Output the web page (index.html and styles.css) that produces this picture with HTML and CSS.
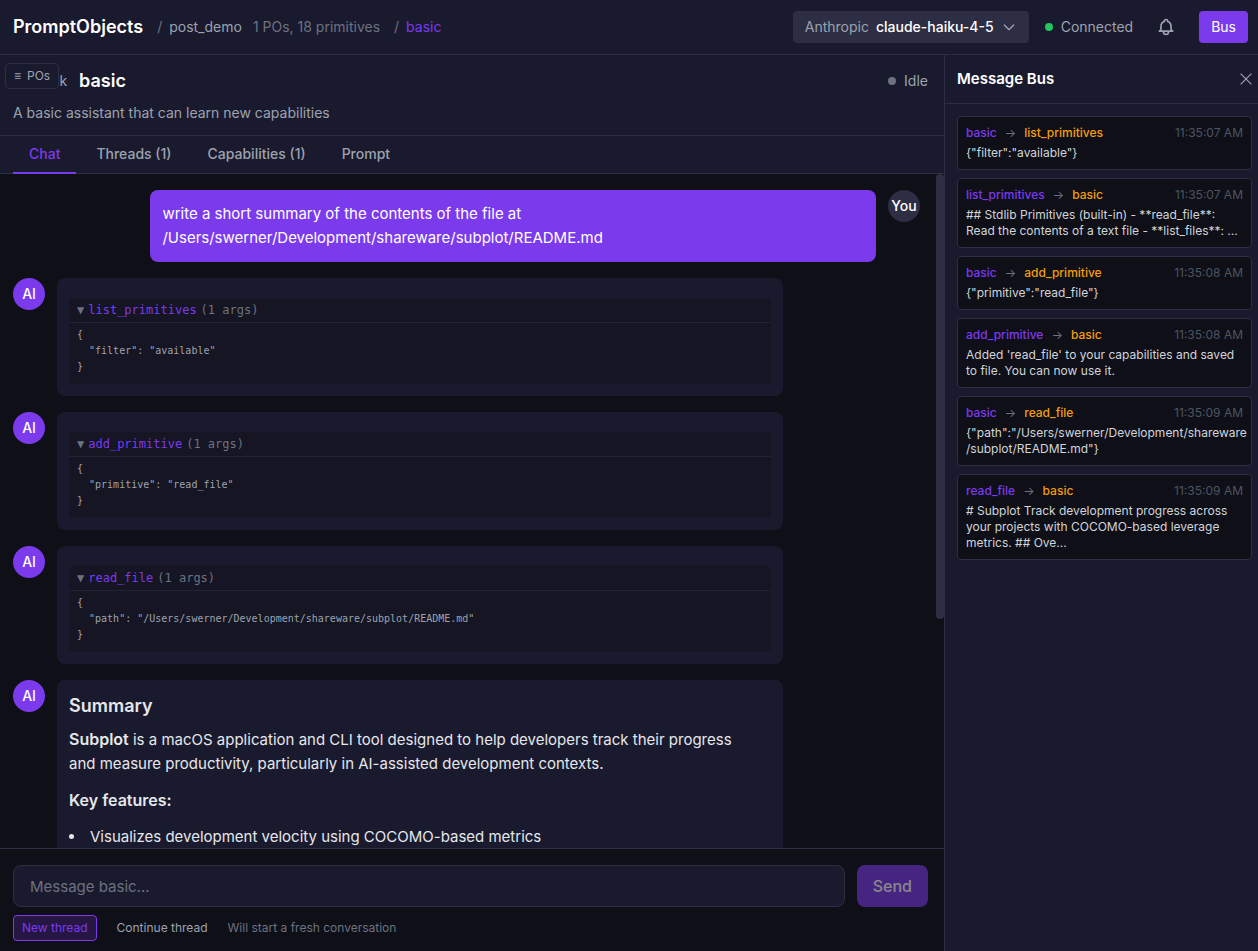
FILE: index.html
```html
<!DOCTYPE html>
<html lang="en">
<head>
<meta charset="utf-8">
<title>PromptObjects</title>
<link rel="stylesheet" href="styles.css">
</head>
<body>
<div class="app">
  <header class="topbar">
    <div class="topbar-left">
      <h1 class="logo">PromptObjects</h1>
      <nav class="crumb"><span class="slash">/</span><span class="crumb-name">post_demo</span><span class="crumb-info">1 POs, 18 primitives</span></nav>
      <nav class="crumb"><span class="slash">/</span><a class="crumb-current" href="#">basic</a></nav>
    </div>
    <div class="topbar-right">
      <button class="model-picker" type="button">
        <span class="provider">Anthropic</span>
        <span class="model">claude-haiku-4-5</span>
        <svg class="chevron" viewBox="0 0 24 24" fill="none" stroke="currentColor" stroke-width="2" stroke-linecap="round" stroke-linejoin="round"><path d="M19 9l-7 7-7-7"/></svg>
      </button>
      <div class="status"><span class="dot dot-online"></span>Connected</div>
      <button class="icon-button" type="button" aria-label="Notifications">
        <svg class="bell" viewBox="0 0 24 24" fill="none" stroke="currentColor" stroke-width="2" stroke-linecap="round" stroke-linejoin="round"><path d="M15 17h5l-1.405-1.405A2.032 2.032 0 0118 14.158V11a6.002 6.002 0 00-4-5.659V5a2 2 0 10-4 0v.341C7.67 6.165 6 8.388 6 11v3.159c0 .538-.214 1.055-.595 1.436L4 17h5m6 0v1a3 3 0 11-6 0v-1m6 0H9"/></svg>
      </button>
      <button class="bus-toggle" type="button">Bus</button>
    </div>
  </header>

  <div class="body">
    <main class="main">
      <button class="pos-toggle" type="button"><span>≡</span><span>POs</span></button>
      <section class="object-head">
        <div class="object-row">
          <button class="back" type="button"><span>←</span><span>Back</span></button>
          <h2 class="object-name">basic</h2>
          <div class="status object-status"><span class="dot dot-idle"></span>Idle</div>
        </div>
        <p class="object-desc">A basic assistant that can learn new capabilities</p>
      </section>

      <nav class="tabs">
        <button class="tab tab-active" type="button">Chat</button>
        <button class="tab" type="button">Threads (1)</button>
        <button class="tab" type="button">Capabilities (1)</button>
        <button class="tab" type="button">Prompt</button>
      </nav>

      <div class="conversation">
        <div class="messages">
          <article class="message message-user">
            <div class="avatar avatar-user">You</div>
            <div class="bubble bubble-user">write a short summary of the contents of the file at<br>/Users/swerner/Development/shareware/subplot/README.md</div>
          </article>

          <article class="message">
            <div class="avatar">AI</div>
            <div class="bubble">
              <div class="tool">
                <button class="tool-head" type="button"><span>▼</span><span class="tool-name">list_primitives</span><span>(1 args)</span></button>
                <pre class="tool-body">{
  "filter": "available"
}</pre>
              </div>
            </div>
          </article>

          <article class="message">
            <div class="avatar">AI</div>
            <div class="bubble">
              <div class="tool">
                <button class="tool-head" type="button"><span>▼</span><span class="tool-name">add_primitive</span><span>(1 args)</span></button>
                <pre class="tool-body">{
  "primitive": "read_file"
}</pre>
              </div>
            </div>
          </article>

          <article class="message">
            <div class="avatar">AI</div>
            <div class="bubble">
              <div class="tool">
                <button class="tool-head" type="button"><span>▼</span><span class="tool-name">read_file</span><span>(1 args)</span></button>
                <pre class="tool-body">{
  "path": "/Users/swerner/Development/shareware/subplot/README.md"
}</pre>
              </div>
            </div>
          </article>

          <article class="message">
            <div class="avatar">AI</div>
            <div class="bubble bubble-long">
              <h3 class="md-title">Summary</h3>
              <p class="md-text"><strong>Subplot</strong> is a macOS application and CLI tool designed to help developers track their progress<br>and measure productivity, particularly in AI-assisted development contexts.</p>
              <p class="md-text"><strong>Key features:</strong></p>
              <ul class="md-list">
                <li>Visualizes development velocity using COCOMO-based metrics</li>
              </ul>
            </div>
          </article>
        </div>
        <div class="scroll-thumb"></div>
      </div>

      <form class="composer">
        <div class="composer-row">
          <input class="composer-input" type="text" placeholder="Message basic..." aria-label="Message basic">
          <button class="send" type="submit" disabled>Send</button>
        </div>
        <div class="composer-options">
          <button class="option option-active" type="button">New thread</button>
          <button class="option" type="button">Continue thread</button>
          <span class="option-hint">Will start a fresh conversation</span>
        </div>
      </form>
    </main>

    <aside class="bus">
      <div class="bus-head">
        <h2 class="bus-title">Message Bus</h2>
        <button class="close" type="button" aria-label="Close"><svg class="close-icon" viewBox="0 0 12 12" fill="none" stroke="currentColor" stroke-width="1.2"><path d="M.6.6l10.8 10.8M11.4.6L.6 11.4"/></svg></button>
      </div>
      <div class="bus-list">
        <article class="event">
          <div class="event-head"><span class="from">basic</span><span class="arrow">→</span><span class="to">list_primitives</span><time class="time">11:35:07 AM</time></div>
          <p class="event-text">{"filter":"available"}</p>
        </article>
        <article class="event">
          <div class="event-head"><span class="from">list_primitives</span><span class="arrow">→</span><span class="to">basic</span><time class="time">11:35:07 AM</time></div>
          <p class="event-text">## Stdlib Primitives (built-in) - **read_file**: Read the contents of a text file - **list_files**: ...</p>
        </article>
        <article class="event">
          <div class="event-head"><span class="from">basic</span><span class="arrow">→</span><span class="to">add_primitive</span><time class="time">11:35:08 AM</time></div>
          <p class="event-text">{"primitive":"read_file"}</p>
        </article>
        <article class="event">
          <div class="event-head"><span class="from">add_primitive</span><span class="arrow">→</span><span class="to">basic</span><time class="time">11:35:08 AM</time></div>
          <p class="event-text">Added 'read_file' to your capabilities and saved to file. You can now use it.</p>
        </article>
        <article class="event">
          <div class="event-head"><span class="from">basic</span><span class="arrow">→</span><span class="to">read_file</span><time class="time">11:35:09 AM</time></div>
          <p class="event-text event-path">{"path":"/Users/swerner/Development/shareware<br>/subplot/README.md"}</p>
        </article>
        <article class="event">
          <div class="event-head"><span class="from">read_file</span><span class="arrow">→</span><span class="to">basic</span><time class="time">11:35:09 AM</time></div>
          <p class="event-text"># Subplot Track development progress across your projects with COCOMO-based leverage metrics. ## Ove...</p>
        </article>
      </div>
    </aside>
  </div>
</div>
</body>
</html>
```
FILE: styles.css
```css
:root {
  --bg: #0f0f17;
  --surface: #1a1a2e;
  --border: #2d2d44;
  --accent: #7c3aed;
  --warning: #f59e0b;
  --text: #e5e7eb;
  --muted: #9ca3af;
  --dim: #6b7280;
  --faint: #4b5563;
}

* { box-sizing: border-box; }

body, h1, h2, h3, p, ul, pre { margin: 0; padding: 0; }

body {
  background: var(--bg);
  color: var(--text);
  font: 15px/24px Inter, "Liberation Sans", sans-serif;
}

button, input { font: inherit; color: inherit; border: 0; background: none; padding: 0; margin: 0; }
button { cursor: pointer; white-space: nowrap; }
a { text-decoration: none; }
svg { display: block; flex: none; }

.app { display: flex; flex-direction: column; height: 100vh; }

/* Top bar */
.topbar {
  display: flex; align-items: center; justify-content: space-between;
  height: 55px; flex: none; padding: 0 10px 0 13px;
  background: var(--surface); border-bottom: 1px solid var(--border);
  font-size: 14px; line-height: 20px; color: var(--muted);
}
.topbar-left { display: flex; align-items: center; gap: 14px; }
.topbar-right { display: flex; align-items: center; gap: 16px; }
.logo { font-size: 18px; line-height: 28px; font-weight: 600; color: #fff; }
.crumb { display: flex; align-items: center; gap: 7px; }
.slash, .crumb-info { color: var(--dim); }
.crumb-info { margin-left: 4px; }
.crumb-current { color: var(--accent); }
.model-picker {
  display: flex; align-items: center; gap: 7px; padding: 6px 12px;
  background: var(--border); border-radius: 4px;
}
.model { color: #fff; font-weight: 500; }
.chevron { width: 16px; height: 16px; }
.status { display: flex; align-items: center; gap: 8px; }
.dot { width: 8px; height: 8px; border-radius: 50%; }
.dot-online { background: #22c55e; }
.dot-idle { background: var(--dim); }
.icon-button { padding: 8px 7px; }
.bell { width: 20px; height: 20px; }
.bus-toggle { padding: 6px 12px; border-radius: 4px; background: var(--accent); color: #fff; }

.body { display: flex; flex: 1; min-height: 0; }

/* Prompt object column */
.main { position: relative; display: flex; flex-direction: column; flex: 1; min-width: 0; }
.pos-toggle {
  position: absolute; left: 5px; top: 8px; display: flex; gap: 6px;
  padding: 4px 8px; border: 1px solid var(--border); border-radius: 4px;
  background: var(--surface); color: var(--muted); font-size: 12px; line-height: 16px;
}
.object-head {
  padding: 12px 16px 12px 13px; background: var(--surface); border-bottom: 1px solid var(--border);
  font-size: 14px; line-height: 20px; color: var(--muted);
}
.object-row { display: flex; align-items: center; gap: 12px; }
.back { display: flex; gap: 8px; }
.object-name { font-size: 18px; line-height: 28px; font-weight: 600; color: #fff; }
.object-status { margin-left: auto; }
.object-desc { margin-top: 8px; }

.tabs {
  display: flex; gap: 4px; height: 38px; flex: none; padding-left: 13px;
  background: var(--surface); border-bottom: 1px solid var(--border);
}
.tab {
  height: 38px; padding: 8px 16px; border-bottom: 2px solid transparent;
  font-size: 14px; line-height: 20px; font-weight: 500; color: var(--muted);
}
.tab-active { color: var(--accent); border-bottom-color: var(--accent); }

/* Conversation */
.conversation { position: relative; display: flex; flex: 1; min-height: 0; }
.messages {
  display: flex; flex-direction: column; gap: 16px; flex: 1; min-width: 0;
  padding: 16px 24px 16px 13px; overflow-y: auto; scrollbar-width: none;
}
.scroll-thumb {
  position: absolute; top: 0; right: 0; width: 8px; height: 66%;
  border-radius: 4px; background: var(--border);
}

.message { display: flex; align-items: flex-start; gap: 12px; flex: none; }
.message-user { flex-direction: row-reverse; }
.avatar {
  display: flex; align-items: center; justify-content: center; flex: none;
  width: 32px; height: 32px; border-radius: 50%;
  background: var(--accent); color: #fff; font-size: 14px; line-height: 20px; font-weight: 500;
}
.avatar-user { background: var(--border); }
.bubble { width: 80%; padding: 12px; border-radius: 8px; background: var(--surface); }
.bubble-user { background: var(--accent); color: #fff; }
.bubble-long { min-height: 492px; }

.tool {
  margin-top: 8px; border-radius: 4px; background: #151523; color: var(--dim);
  font-family: "DejaVu Sans Mono", monospace; font-size: 12px; line-height: 16px;
}
.tool-head {
  display: flex; gap: 4px; width: 100%; padding: 4px 8px;
  border-bottom: 1px solid #222234;
}
.tool-name { color: var(--accent); }
.tool-body {
  padding: 4px 8px 9px; color: var(--muted);
  font-family: inherit; font-size: 10px; line-height: 16px;
}

.md-title { font-size: 18px; line-height: 28px; font-weight: 600; margin-bottom: 7px; }
.md-text { margin-bottom: 12px; }
.md-text strong { font-size: 16px; font-weight: 600; }
.md-list { list-style: disc inside; }

/* Composer */
.composer { flex: none; padding: 16px 16px 10px 13px; border-top: 1px solid var(--border); }
.composer-row { display: flex; gap: 12px; }
.composer-input {
  flex: 1; min-width: 0; height: 42px; padding: 0 16px;
  border: 1px solid var(--border); border-radius: 8px; background: var(--surface);
}
.composer-input::placeholder { color: var(--dim); opacity: 1; }
.send {
  padding: 0 16px; border-radius: 8px; background: var(--accent); color: #fff;
  font-size: 16px; font-weight: 500; opacity: 0.5;
}
.composer-options {
  display: flex; align-items: center; gap: 12px; margin-top: 8px;
  font-size: 12px; line-height: 16px; color: var(--muted);
}
.option { padding: 4px 8px; border-radius: 4px; }
.option-active { border: 1px solid var(--accent); background: #251643; color: var(--accent); }
.option-hint { color: var(--dim); }

/* Message bus */
.bus { width: 314px; flex: none; background: var(--surface); border-left: 1px solid var(--border); }
.bus-head {
  display: flex; align-items: center; justify-content: space-between;
  height: 49px; padding: 0 6px 0 12px; border-bottom: 1px solid var(--border);
}
.bus-title { font-size: 15px; line-height: 24px; font-weight: 600; color: #fff; }
.close { color: var(--muted); }
.close-icon { width: 12px; height: 12px; }
.bus-list { display: flex; flex-direction: column; gap: 8px; padding: 12px 6px 12px 12px; }
.event {
  padding: 8px; border: 1px solid var(--border); border-radius: 4px; background: var(--bg);
  font-size: 12px; line-height: 16px;
}
.event-head { display: flex; gap: 8px; margin-bottom: 4px; }
.from { color: var(--accent); font-weight: 500; }
.arrow { color: var(--dim); }
.to { color: var(--warning); font-weight: 500; }
.time { margin-left: auto; color: var(--faint); }
.event-text { color: #d1d5db; overflow-wrap: anywhere; }
.event-path { white-space: nowrap; }
```
